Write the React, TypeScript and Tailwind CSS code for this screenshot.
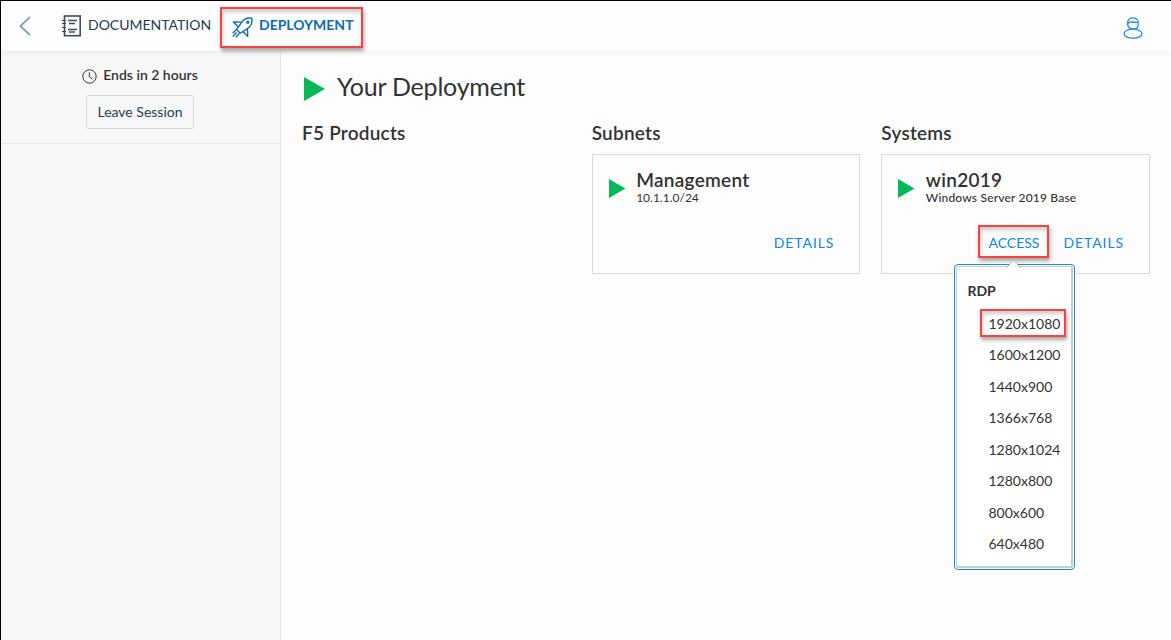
import type { ReactNode } from "react";

const resolutions = ["1920x1080", "1600x1200", "1440x900", "1366x768", "1280x1024", "1280x800", "800x600", "640x480"];

function BackIcon() {
  return (
    <svg className="h-[20px] w-[12px]" viewBox="0 0 12 20" fill="none" stroke="#7f9db5" strokeWidth="1.8">
      <path d="M11 0.8 L1.4 10 L11 19.2" />
    </svg>
  );
}

function NotebookIcon() {
  return (
    <svg className="h-[22px] w-[20px]" viewBox="0 0 20 22" fill="none" stroke="#3f4e5a">
      <rect x="2.5" y="1" width="15.7" height="19.7" strokeWidth="1.6" />
      <path d="M0 5.5h4M0 8.5h4M0 12.5h4M0 16.5h4" strokeWidth="1.2" />
      <path d="M6 5.5h9M7 8.5h6M6 14.5h9M7 17h6" strokeWidth="1.3" />
    </svg>
  );
}

function RocketIcon() {
  return (
    <svg className="h-[21px] w-[21px]" viewBox="0 0 21 21" fill="none" stroke="#0f6bb0" strokeWidth="1.35" strokeLinejoin="round">
      <path d="M19.8 1.2C15 .4 11.8 2 9.4 5.6L4.6 12.6l3.6 3.6 7.2-4.6C19 9.2 20.6 5.8 19.8 1.2Z" />
      <path d="M9.2 5.2 1.4 5l5 5M15.4 11.6 15.8 19.4l-5-4.8" />
      <circle cx="15.8" cy="5.2" r="1" />
      <path d="M4 13 .7 16.2M4.6 15.6.8 19.4M7.4 16.6l-3.6 3.6" />
    </svg>
  );
}

function UserIcon() {
  return (
    <svg className="h-[22px] w-[20px]" viewBox="0 0 20 22" fill="none" stroke="#2388e0" strokeWidth="1.3">
      <path d="M4.7 5.2C4.7 2.4 7 .9 10 .9s5.2 1.6 5.2 4.4v2.2c0 2.7-2 4.6-5 4.6s-5.5-1.9-5.5-4.6Z" />
      <path d="M4.8 7.3c.5-2 2.3-2.7 4.2-2.3 1.8.5 3.8.6 6 .2" />
      <ellipse cx="10" cy="16.7" rx="9" ry="4.5" />
    </svg>
  );
}

function ClockIcon() {
  return (
    <svg className="h-[15px] w-[15px]" viewBox="0 0 15 15" fill="none" stroke="#333">
      <circle cx="7.5" cy="7.5" r="6.7" strokeWidth="1" />
      <path d="M7.3 3.3v4.5l3.2 2.4" strokeWidth="1" />
    </svg>
  );
}

function Play({ className }: { className: string }) {
  return (
    <svg className={className} viewBox="0 0 20 24" preserveAspectRatio="none" fill="#05b856">
      <path d="M0 0 20 12 0 24Z" />
    </svg>
  );
}

function Column({ title, children }: { title: string; children?: ReactNode }) {
  return (
    <section>
      <h2 className="h-6 text-[19px] leading-6 font-semibold tracking-[0.22px]">{title}</h2>
      {children}
    </section>
  );
}

function Card({ name, detail, detailClass, children }: { name: string; detail: string; detailClass: string; children: ReactNode }) {
  return (
    <div className="mt-[9px] flex h-[120px] flex-col border border-[#d9d9d9] pt-[14px] pl-[16px]">
      <div className="flex">
        <Play className="mt-[10px] mr-[11px] h-[19px] w-[16.5px]" />
        <div>
          <h3 className="h-[22px] text-[19px] leading-[21px] font-semibold tracking-[0.28px]">{name}</h3>
          <p className={detailClass}>{detail}</p>
        </div>
      </div>
      <div className="mt-[20px] flex h-[33px] items-center justify-end pr-[25px] text-[14px] leading-[18px] text-[#0d87e0]">
        {children}
      </div>
    </div>
  );
}

export default function App() {
  return (
    <div className="flex h-[640px] w-[1171px] flex-col overflow-hidden border-t border-l border-black bg-[#fdfdfd] font-['Lato',sans-serif] text-[#333]">
      <header className="relative z-10 flex h-[50px] shrink-0 items-center bg-[#fdfdfd] shadow-[0_1px_8px_rgba(0,0,0,0.05)]">
        <button className="ml-[18px]">
          <BackIcon />
        </button>
        <a className="ml-[31px] flex items-center">
          <NotebookIcon />
          <span className="ml-[6px] h-[22px] w-[132px] text-[14px] leading-[20px] whitespace-nowrap text-[#293e4b]">DOCUMENTATION</span>
        </a>
        <a className="mt-[3px] flex h-[41px] w-[143px] items-center border-2 border-[#f44343] pl-[10px] shadow-[1px_3px_4px_rgba(0,0,0,0.35),inset_1px_3px_4px_rgba(0,0,0,0.2)]">
          <RocketIcon />
          <span className="ml-[6px] h-[22px] text-[14px] leading-[16px] font-bold whitespace-nowrap text-[#0f6bb0]">DEPLOYMENT</span>
        </a>
        <button className="mr-[28.5px] ml-auto mt-[3px]">
          <UserIcon />
        </button>
      </header>

      <div className="flex flex-1">
        <aside className="w-[280px] shrink-0 border-r border-[#e7e7e7] bg-[#f7f7f7]">
          <div className="flex h-[93px] flex-col items-center border-b border-[#e7e7e7] pt-[15px] pr-px">
            <div className="flex h-[20px] items-center gap-[6px] text-[14px] leading-[20px] font-semibold">
              <ClockIcon />
              <span className="h-[22px] whitespace-nowrap">Ends in 2 hours</span>
            </div>
            <button className="mt-[9px] h-[34px] w-[108px] rounded-[3px] border border-[#d9d9d9] pb-px text-[14px] leading-[18px] whitespace-nowrap text-[#293e4b]">Leave Session</button>
          </div>
        </aside>

        <main className="flex-1 pt-[20px] pr-[21px] pl-[21px]">
          <div className="flex h-[34px] items-start">
            <Play className="mt-[6px] ml-[2px] h-[24px] w-[21px]" />
            <h1 className="ml-[12px] text-[25px] leading-[30px] tracking-[-0.2px] whitespace-nowrap">Your Deployment</h1>
          </div>
          <div className="mt-[16px] grid grid-cols-3 gap-[21px]">
            <Column title="F5 Products" />
            <Column title="Subnets">
              <Card name="Management" detail="10.1.1.0/24" detailClass="text-[12px] leading-[14px]">
                <a className="mt-[2px] tracking-[0.9px]">DETAILS</a>
              </Card>
            </Column>
            <Column title="Systems">
              <Card name="win2019" detail="Windows Server 2019 Base" detailClass="text-[12px] leading-[14px] font-medium tracking-[0.18px] whitespace-nowrap">
                <div className="relative mr-[14px]">
                  <a className="flex h-[33px] w-[71px] items-center justify-center border-2 border-[#f44343] pt-[2px] shadow-[1px_3px_4px_rgba(0,0,0,0.35),inset_1px_3px_4px_rgba(0,0,0,0.2)]">ACCESS</a>
                  <div className="absolute top-[39px] left-[-24px] z-20 h-[306px] w-[121px] rounded-[4px] border border-[#168bd8] bg-white p-px">
                    <div className="h-full rounded-[2px] border-t border-r-2 border-b-2 border-l border-[#cbcbcb] bg-white pt-[14px] pl-[10px] text-[#333]">
                      <div className="h-[19px] text-[14px] leading-[19px] font-bold">RDP</div>
                      <ul className="mt-[9px]">
                        {resolutions.map((size, i) => (
                          <li key={size} className="h-[31.5px]">
                            {i === 0 ? (
                              <span className="ml-[13px] flex h-[28px] w-[86px] items-center border-2 border-[#f44343] pt-px pl-[6px] shadow-[1px_3px_4px_rgba(0,0,0,0.35),inset_1px_3px_4px_rgba(0,0,0,0.2)]">{size}</span>
                            ) : (
                              <span className="ml-[21px] flex h-[29px] items-center">{size}</span>
                            )}
                          </li>
                        ))}
                      </ul>
                    </div>
                    <svg className="absolute top-[-5px] left-[51px] h-[8px] w-[15px]" viewBox="0 0 15 8" fill="#fff" stroke="#b8b8b8">
                      <path d="M0 7.5h1L6 1.5Q7.5 0 9 1.5l5 6h1" />
                    </svg>
                  </div>
                </div>
                <a className="mt-[2px] tracking-[0.9px]">DETAILS</a>
              </Card>
            </Column>
          </div>
        </main>
      </div>
    </div>
  );
}
